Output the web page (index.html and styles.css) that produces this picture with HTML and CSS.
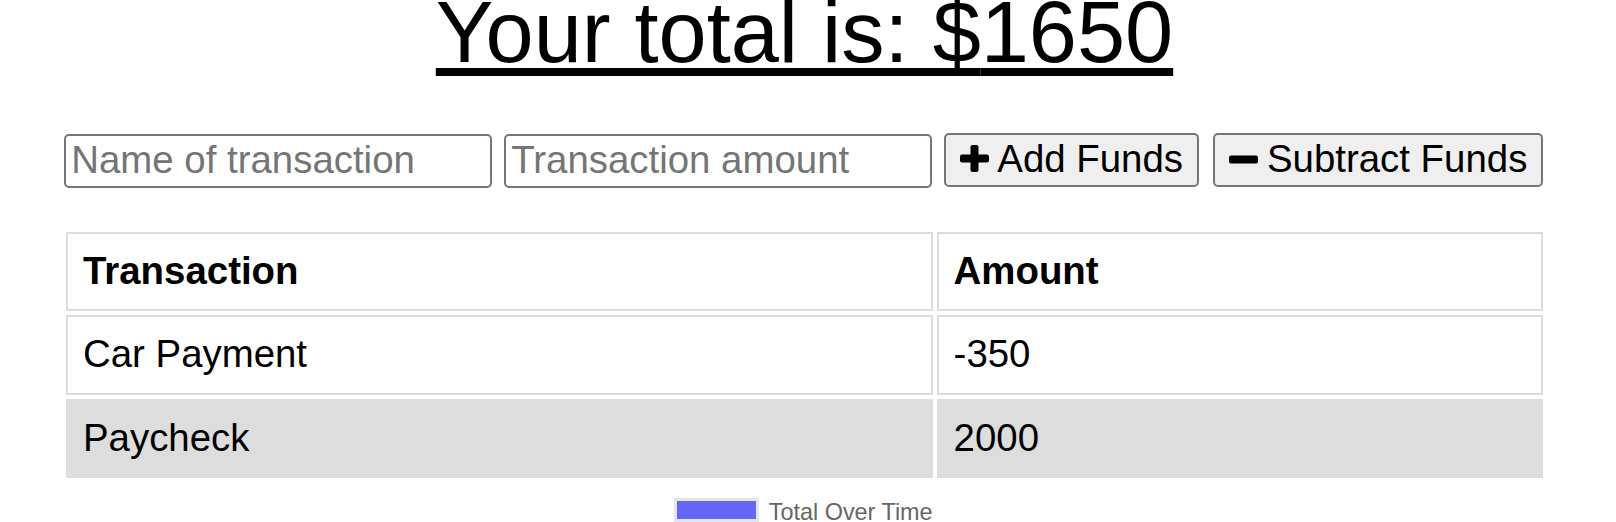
FILE: index.html
```html
<!DOCTYPE html>
<html lang="en">
<head>
<meta charset="utf-8">
<title>Budget Tracker</title>
<link rel="stylesheet" href="styles.css">
</head>
<body>
<div class="page">
  <h1 class="total">Your total is: $<span id="total">1650</span></h1>

  <form class="entry">
    <input class="field" type="text" placeholder="Name of transaction">
    <input class="field" type="number" placeholder="Transaction amount">
    <button class="btn" type="button">
      <svg class="icon" viewBox="0 0 29 27" aria-hidden="true"><rect x="0" y="9.5" width="29" height="8" rx="2"/><rect x="10.5" y="0" width="8" height="27" rx="2"/></svg>
      <span>Add Funds</span>
    </button>
    <button class="btn btn-sub" type="button">
      <svg class="icon" viewBox="0 0 29 27" aria-hidden="true"><rect x="0" y="10.5" width="29" height="8" rx="2"/></svg>
      <span>Subtract Funds</span>
    </button>
  </form>

  <table class="ledger">
    <thead>
      <tr><th class="col-name">Transaction</th><th>Amount</th></tr>
    </thead>
    <tbody>
      <tr><td>Car Payment</td><td>-350</td></tr>
      <tr class="alt"><td>Paycheck</td><td>2000</td></tr>
    </tbody>
  </table>

  <div class="legend">
    <span class="swatch"></span>
    <span class="legend-label">Total Over Time</span>
  </div>
</div>
</body>
</html>
```

FILE: styles.css
```css
html {
  overflow: hidden;
}

body {
  margin: 0;
  background: #ffffff;
  color: #000000;
  font-family: "Liberation Sans", Arial, Helvetica, sans-serif;
}

.page {
  width: 1485px;
  margin-left: 62px;
}

.total {
  margin: -16.7px 0 0;
  font-size: 86.5px;
  font-weight: normal;
  line-height: normal;
  text-align: center;
  text-decoration: underline;
  text-decoration-thickness: 8px;
  text-underline-offset: 6px;
  text-decoration-skip-ink: auto;
}

.entry {
  display: flex;
  align-items: flex-start;
  gap: 12px;
  margin-top: 51px;
  padding-left: 2.3px;
}

.field {
  box-sizing: border-box;
  width: 428px;
  height: 54px;
  margin-top: 0.5px;
  padding: 0 5px 2px;
  border: 2px solid #767676;
  border-radius: 5px;
  background: #ffffff;
  font-family: "Liberation Sans", Arial, Helvetica, sans-serif;
  font-size: 38.4px;
  color: #000000;
}

.field::placeholder {
  color: #757575;
}

.btn {
  box-sizing: border-box;
  display: inline-flex;
  align-items: center;
  gap: 8px;
  height: 54px;
  margin: 0;
  padding: 0 14px 3px;
  border: 2px solid #767676;
  border-radius: 5px;
  background: #efefef;
  color: #000000;
  font-family: "Liberation Sans", Arial, Helvetica, sans-serif;
  font-size: 38.4px;
  line-height: 44px;
  white-space: nowrap;
}

.btn-sub {
  margin-left: 2px;
  gap: 9px;
}

.icon {
  width: 29px;
  height: 27px;
  fill: #000000;
  flex: none;
}

.ledger {
  width: 1485px;
  margin-top: 40px;
  border-collapse: separate;
  border-spacing: 4.7px;
  font-size: 38.4px;
  line-height: 44.4px;
}

.ledger th,
.ledger td {
  box-sizing: border-box;
  padding: 15px 15px 16px;
  border: 2px solid #dddddd;
  text-align: left;
}

.ledger th {
  font-weight: bold;
}

.ledger .col-name {
  width: 866.6px;
}

.ledger .alt td {
  background: #dddddd;
}

.legend {
  display: flex;
  justify-content: center;
  align-items: flex-start;
  gap: 10px;
  margin-top: 16px;
  padding-right: 2px;
}

.swatch {
  box-sizing: border-box;
  width: 84.4px;
  height: 24px;
  border: 3px solid #e6e6e6;
  background: #6666f6;
}

.legend-label {
  margin-top: 3px;
  font-family: "Liberation Sans", Helvetica, Arial, sans-serif;
  font-size: 23.4px;
  line-height: 1;
  color: #666666;
}
```
